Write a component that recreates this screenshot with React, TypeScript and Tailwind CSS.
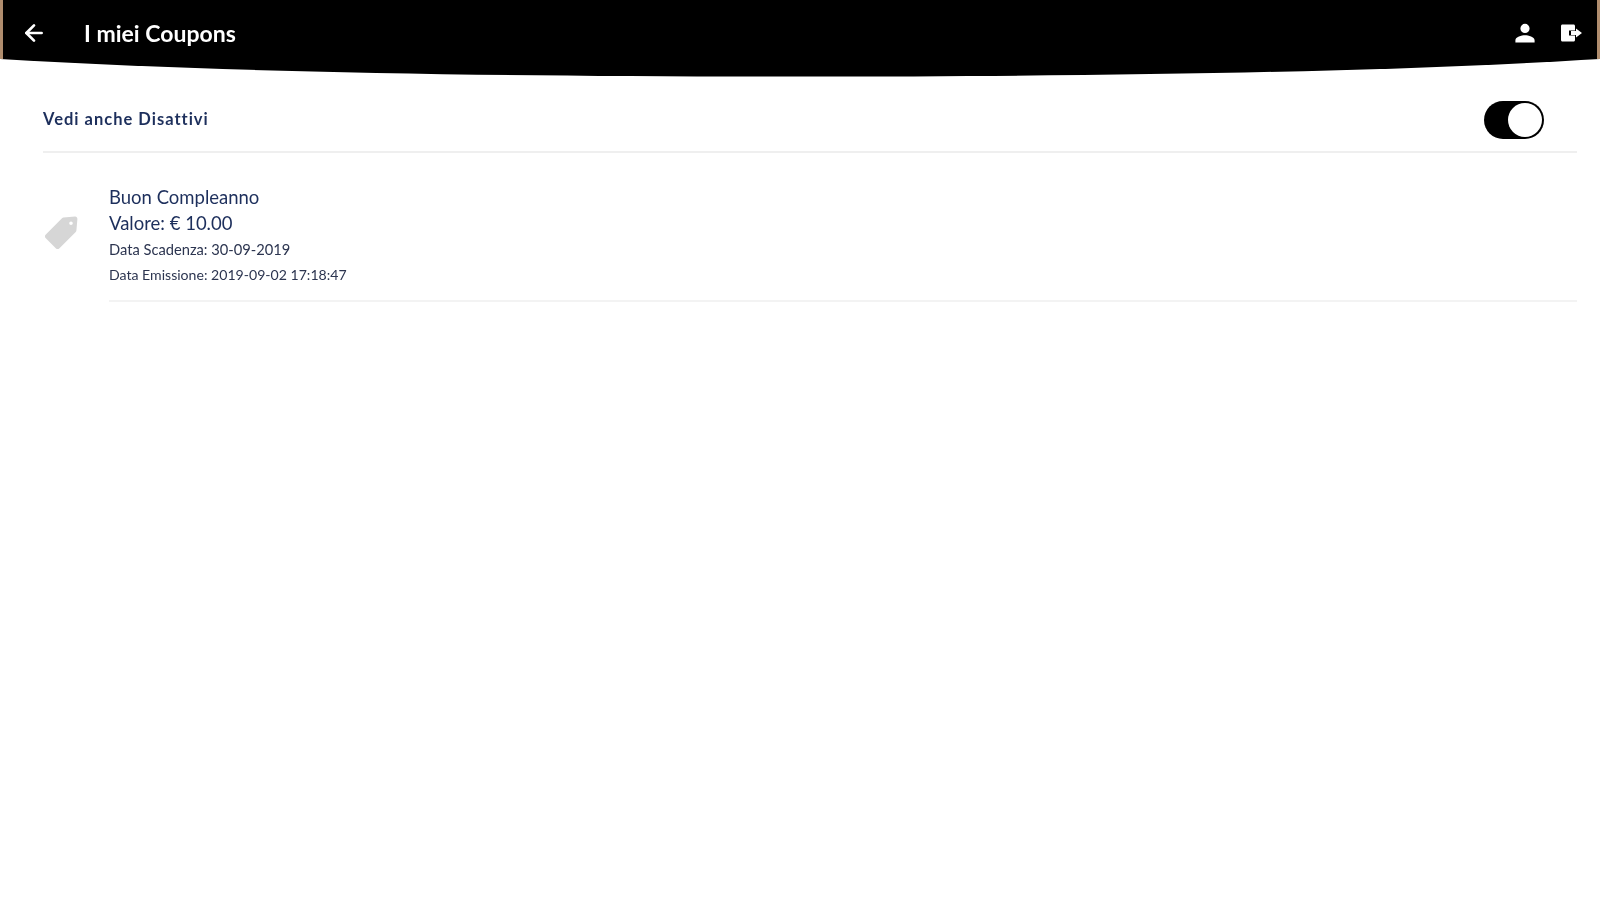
import { ArrowLeft } from "lucide-react";

function UserIcon() {
  return (
    <svg width="24" height="24" viewBox="0 0 24 24" fill="white">
      <path d="M12 12a4.600 4.600 0 1 0 0-9.200 4.600 4.600 0 0 0 0 9.200zm0 2.200c-3.400 0-9.600 1.700-9.600 5v2.400h19.200v-2.400c0-3.300-6.200-5-9.600-5z" />
    </svg>
  );
}

function ExitIcon() {
  return (
    <svg width="24" height="24" viewBox="0 0 24 24" fill="white">
      <path d="M3.500 3.500h11c.9 0 1.500.6 1.500 1.500v4.500h-6v5h6V19c0 .9-.6 1.500-1.500 1.500h-11C2.600 20.500 2 19.900 2 19V5c0-.9.6-1.500 1.500-1.500z" />
      <path d="M17 7.500 23 12l-6 4.500V14h-5v-4h5z" />
    </svg>
  );
}

function TagIcon() {
  return (
    <svg width="36" height="36" viewBox="0 0 36 36" fill="#d6d6d6">
      <path d="M20.500 2.500 32 1.500c1.300-.1 2.500 1 2.400 2.400l-1 11.500c0 .6-.3 1.100-.7 1.500L16.200 33.400c-.9.900-2.300.900-3.200 0L2.600 23c-.9-.900-.9-2.300 0-3.200L19 3.200c.4-.4.900-.7 1.500-.7zm7.500 4a1.800 1.800 0 1 0 0 3.600 1.800 1.800 0 0 0 0-3.600z" fillRule="evenodd" />
    </svg>
  );
}

function Toggle() {
  return (
    <div className="flex h-[38px] w-[60px] items-center justify-end rounded-full bg-black">
      <div className="h-[34px] w-[34px] mr-[2px] rounded-full bg-white" />
    </div>
  );
}

function App() {
  return (
    <div className="relative h-[900px] w-full bg-white font-['Lato',sans-serif] blur-[0.6px]">
      <header className="flex h-[59px] items-center justify-between border-x-[3px] border-x-[#b08d6e] bg-black pl-[18px] pr-[14px] pt-[7px] text-white">
        <div className="flex items-center">
          <ArrowLeft size={26} strokeWidth={2.500} />
          <h1 className="ml-[37px] text-[23px] font-bold">I miei Coupons</h1>
        </div>
        <div className="flex items-center gap-[22px]">
          <UserIcon />
          <ExitIcon />
        </div>
      </header>
      {/* curva sotto la barra */}
      <svg className="absolute left-0 top-[59px] block" width="1600" height="18" viewBox="0 0 1600 18" preserveAspectRatio="none">
        <path d="M0 0H1600C1400 12 1150 17.500 800 17.500S200 12 0 0Z" fill="black" />
      </svg>

      <main className="pl-[43px] pr-[23px] pt-[18px]">
        <div className="flex h-[76px] items-center justify-between border-b-2 border-[#efefef] pr-[33px] pt-[11px]">
          <span className="text-[16.500px] font-bold tracking-[1px] text-[#1d2f5c]">Vedi anche Disattivi</span>
          <Toggle />
        </div>

        <div className="flex items-center pt-[31px]">
          <div className="w-[66px] shrink-0 pb-[20px]">
            <TagIcon />
          </div>
          <div className="flex-1 border-b-2 border-[#f3f3f3] pb-[12px]">
            <p className="text-[18.500px] leading-[26px] text-[#1d2f5c]">Buon Compleanno</p>
            <p className="text-[18.500px] leading-[26px] text-[#1d2f5c]">Valore: € 10.00</p>
            <p className="text-[14.700px] leading-[26px] text-[#2c3550]">Data Scadenza: 30-09-2019</p>
            <p className="text-[14.100px] leading-[26px] text-[#2c3550]">Data Emissione: 2019-09-02 17:18:47</p>
          </div>
        </div>
      </main>
    </div>
  );
}

export default App;
